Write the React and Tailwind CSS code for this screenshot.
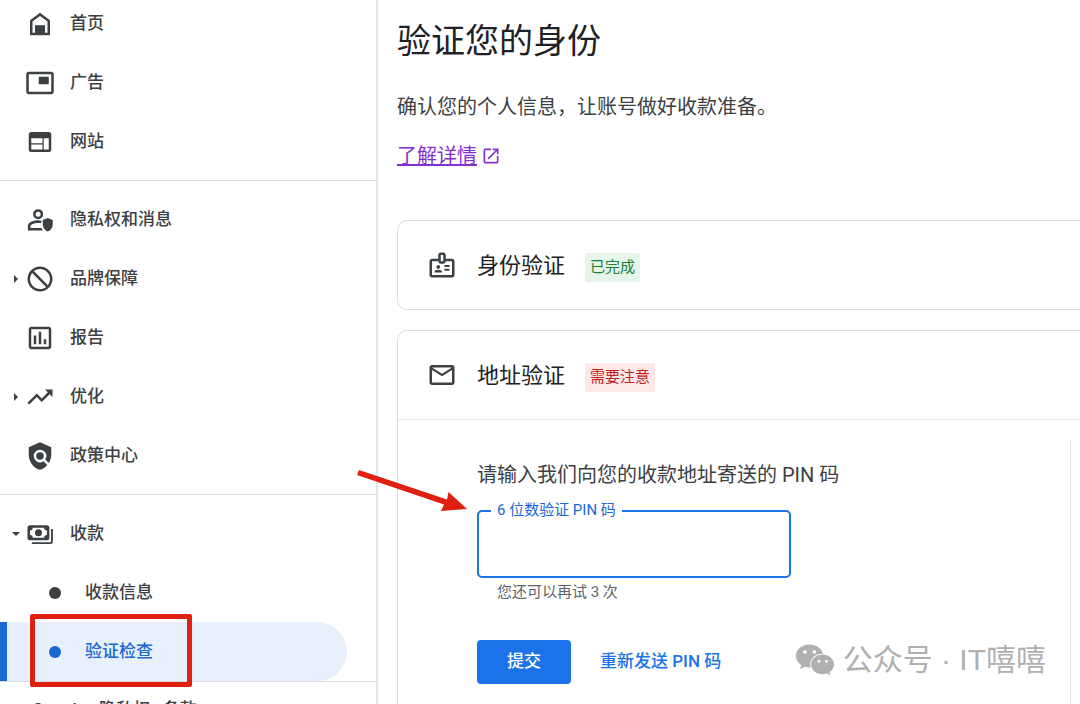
import {
  MdBlock,
  MdMailOutline,
  MdOpenInNew,
  MdOutlineAssessment,
  MdOutlineBadge,
  MdPictureInPicture,
  MdPolicy,
  MdTrendingUp,
} from 'react-icons/md'
import { FaWeixin } from 'react-icons/fa'

function HomeIcon(props) {
  return (
    <svg viewBox="0 0 24 24" fill="currentColor" {...props}>
      <path fillRule="evenodd" d="M12 3 4 9v12h16V9l-8-6zm6 16h-2v-6H8v6H6v-9l6-4.5 6 4.5v9z" />
    </svg>
  )
}

function SitesIcon(props) {
  return (
    <svg viewBox="0 0 24 24" fill="currentColor" {...props}>
      <path
        fillRule="evenodd"
        d="M5 4h14a2 2 0 0 1 2 2v12a2 2 0 0 1-2 2H5a2 2 0 0 1-2-2V6c0-1.1.9-2 2-2zm0 5v4h9V9H5zm0 5v4h9v-4H5zm10-5v9h4V9h-4z"
      />
    </svg>
  )
}

function PrivacyIcon(props) {
  return (
    <svg viewBox="0 0 24 24" fill="currentColor" {...props}>
      <path
        fillRule="evenodd"
        d="M10.5 3.3a4 4 0 1 0 0 8 4 4 0 0 0 0-8zm0 2a2 2 0 1 1 0 4 2 2 0 0 1 0-4z"
      />
      <path d="M13.5 12.7c-1-.3-2-.5-3-.5-2.7 0-8.2 1.3-8.2 4.5v3.6h12a7 7 0 0 1-1-2h-9v-1.500c0-1.200 3.200-2.500 6.200-2.500.7 0 1.400.1 2 .2z" />
      <path d="m18.2 10.3 4 1.7v3.2c0 2.8-1.7 5.2-4 6-2.3-.8-4-3.2-4-6V12z" />
    </svg>
  )
}

function PaymentsIcon(props) {
  return (
    <svg viewBox="0 0 24 24" fill="currentColor" {...props}>
      <path
        fillRule="evenodd"
        d="M4 5h13.5a2 2 0 0 1 2 2v8a2 2 0 0 1-2 2H4a2 2 0 0 1-2-2V7c0-1.1.9-2 2-2zm2.2 2A2.2 2.2 0 0 1 4 9.200v3.600A2.200 2.200 0 0 1 6.200 15h9.100a2.200 2.200 0 0 1 2.200-2.200V9.200A2.200 2.200 0 0 1 15.300 7z"
      />
      <circle cx="10.75" cy="11" r="2.8" />
      <path d="M20.8 8h1.5v10a2 2 0 0 1-2 2H5.5v-1.5h15.3z" />
    </svg>
  )
}

function BrandSafetyIcon({ className, ...rest }) {
  return <MdBlock className={`${className} -scale-x-100`} {...rest} />
}

const NAV_GROUPS = [
  [
    { label: '首页', Icon: HomeIcon },
    { label: '广告', Icon: MdPictureInPicture },
    { label: '网站', Icon: SitesIcon },
  ],
  [
    { label: '隐私权和消息', Icon: PrivacyIcon },
    { label: '品牌保障', Icon: BrandSafetyIcon, caret: 'right' },
    { label: '报告', Icon: MdOutlineAssessment },
    { label: '优化', Icon: MdTrendingUp, caret: 'right' },
    { label: '政策中心', Icon: MdPolicy },
  ],
  [
    {
      label: '收款',
      Icon: PaymentsIcon,
      caret: 'down',
      children: [{ label: '收款信息' }, { label: '验证检查', active: true }],
    },
  ],
]

function Caret({ dir }) {
  return (
    <svg viewBox="0 0 10 10" className="h-[10px] w-[10px]" fill="currentColor" aria-hidden="true">
      <path d={dir === 'down' ? 'M1 3h8L5 7z' : 'M3 1v8l4-4z'} />
    </svg>
  )
}

function NavItem({ item }) {
  const { label, Icon, caret, children } = item
  return (
    <li>
      <a href="#" className="flex h-[59px] items-center">
        <span className="ml-[7px] flex w-[18px] justify-center">{caret && <Caret dir={caret} />}</span>
        <Icon className="h-[30px] w-[30px]" aria-hidden="true" />
        <span className="ml-[15px]">{label}</span>
      </a>
      {children && (
        <ul>
          {children.map(child => <NavChild key={child.label} item={child} />)}
        </ul>
      )}
    </li>
  )
}

function NavChild({ item }) {
  if (!item.active) {
    return (
      <li>
        <a href="#" className="flex h-[59px] items-center gap-6 pl-[49px]">
          <span className="h-3 w-3 rounded-full bg-[#3c4043]" />
          {item.label}
        </a>
      </li>
    )
  }
  return (
    <li className="relative">
      <a
        href="#"
        aria-current="page"
        className="mr-[29px] flex h-[59px] items-center gap-6 rounded-r-full border-l-[7px] border-[#1967d2] bg-[#e8f0fe] pl-[42px] text-[#1967d2]"
      >
        <span className="h-3 w-3 rounded-full bg-[#1967d2]" />
        {item.label}
      </a>
      {/* highlight frame */}
      <div className="pointer-events-none absolute -top-2 -bottom-1.5 left-[30px] z-10 w-[162px] rounded-xs border-[5px] border-[#df2010]" />
    </li>
  )
}

function Sidebar() {
  return (
    <aside className="w-[378px] shrink-0 border-r-2 border-[#e4e5e9] text-[17px] font-medium text-[#3c4043]">
      <nav className="-mt-[15px] divide-y divide-[#dadce0]">
        {NAV_GROUPS.map(group => (
          <ul key={group[0].label} className="py-[9px] last:pb-0">
            {group.map(item => <NavItem key={item.label} item={item} />)}
          </ul>
        ))}
      </nav>
      <footer className="flex gap-[13px] border-t border-[#dadce0] px-8 pt-[15px]">
        <span>Google</span>
        <a href="#">隐私权</a>
        <a href="#">条款</a>
      </footer>
    </aside>
  )
}

function CardHeader({ Icon, title, badge, tone }) {
  return (
    <div className="flex h-[88px] items-center pl-[29px]">
      <Icon className="h-[30px] w-[30px] text-[#3c4043]" aria-hidden="true" />
      <h2 className="ml-5 text-[22px] text-[#202124]">{title}</h2>
      <span
        className={`mt-1 ml-5 rounded-xs px-[5px] text-[15px] leading-[29px] ${
          tone === 'ok' ? 'bg-[#e6f4ea] text-[#188038]' : 'bg-[#fce8e6] text-[#c5221f]'
        }`}
      >
        {badge}
      </span>
    </div>
  )
}

function PinForm() {
  return (
    <form className="mr-[9px] border-r border-[#e4e5e9] pt-5 pb-10 pl-[79px]" onSubmit={e => e.preventDefault()}>
      <p className="text-[20px] leading-[30px] text-[#3c4043]">请输入我们向您的收款地址寄送的 PIN 码</p>
      <div className="relative mt-5 w-[314px]">
        <input
          id="pin"
          inputMode="numeric"
          maxLength={6}
          aria-describedby="pin-hint"
          className="block h-[68px] w-full rounded-[5px] border-2 border-[#1a73e8] px-5 text-[20px] outline-none"
        />
        <label htmlFor="pin" className="absolute -top-3 left-3.5 bg-white px-1.5 text-[15px] leading-6 text-[#1967d2]">
          6 位数验证 PIN 码
        </label>
      </div>
      <p id="pin-hint" className="mt-0.5 pl-5 text-[15px] leading-6 text-[#5f6368]">您还可以再试 3 次</p>
      <div className="mt-9 flex gap-[29px] text-[17px] font-medium">
        <button type="submit" className="h-11 w-[94px] rounded-sm bg-[#1a73e8] text-white">提交</button>
        <button type="button" className="h-11 text-[#1a73e8]">重新发送 PIN 码</button>
      </div>
    </form>
  )
}

export default function App() {
  return (
    <div className="relative flex h-screen overflow-hidden bg-white font-[Roboto,'Noto_Sans_CJK_SC',sans-serif]">
      <Sidebar />

      <main className="min-w-0 flex-1 pl-[19px]">
        <h1 className="pt-[17px] text-[34px] leading-[48px] text-[#202124]">验证您的身份</h1>
        <p className="mt-[27px] text-[20px] leading-[30px] text-[#3c4043]">确认您的个人信息，让账号做好收款准备。</p>
        <a href="#" className="mt-[19px] flex items-center gap-1 text-[20px] leading-[30px] text-[#8430ce]">
          <span className="underline">了解详情</span>
          <MdOpenInNew className="h-5 w-5" aria-hidden="true" />
        </a>

        <section className="mt-[49px] rounded-l-[10px] border border-r-0 border-[#dadce0]">
          <CardHeader Icon={MdOutlineBadge} title="身份验证" badge="已完成" tone="ok" />
        </section>

        <section className="mt-5 rounded-l-[10px] border border-r-0 border-[#dadce0]">
          <CardHeader Icon={MdMailOutline} title="地址验证" badge="需要注意" tone="warn" />
          <div className="border-t border-[#e4e5e9] pt-5">
            <PinForm />
          </div>
        </section>
      </main>

      {/* pointer to the PIN field */}
      <svg viewBox="0 0 112 46" className="pointer-events-none absolute top-[468px] left-[356px] h-[46px] w-[112px]" fill="#df2010" aria-hidden="true">
        <path d="M3 2 91 31.5 92.5 24 111 41 85 43 88 36.5 1 7z" />
      </svg>

      {/* watermark */}
      <div className="pointer-events-none absolute right-[34px] bottom-[21px] flex items-center gap-2 font-['Liberation_Sans','Noto_Sans_CJK_SC',sans-serif] text-[30px] leading-[46px] text-[#b0b0b0]">
        <FaWeixin className="h-9 w-10" aria-hidden="true" />
        <span>公众号 · IT嘻嘻</span>
      </div>
    </div>
  )
}
